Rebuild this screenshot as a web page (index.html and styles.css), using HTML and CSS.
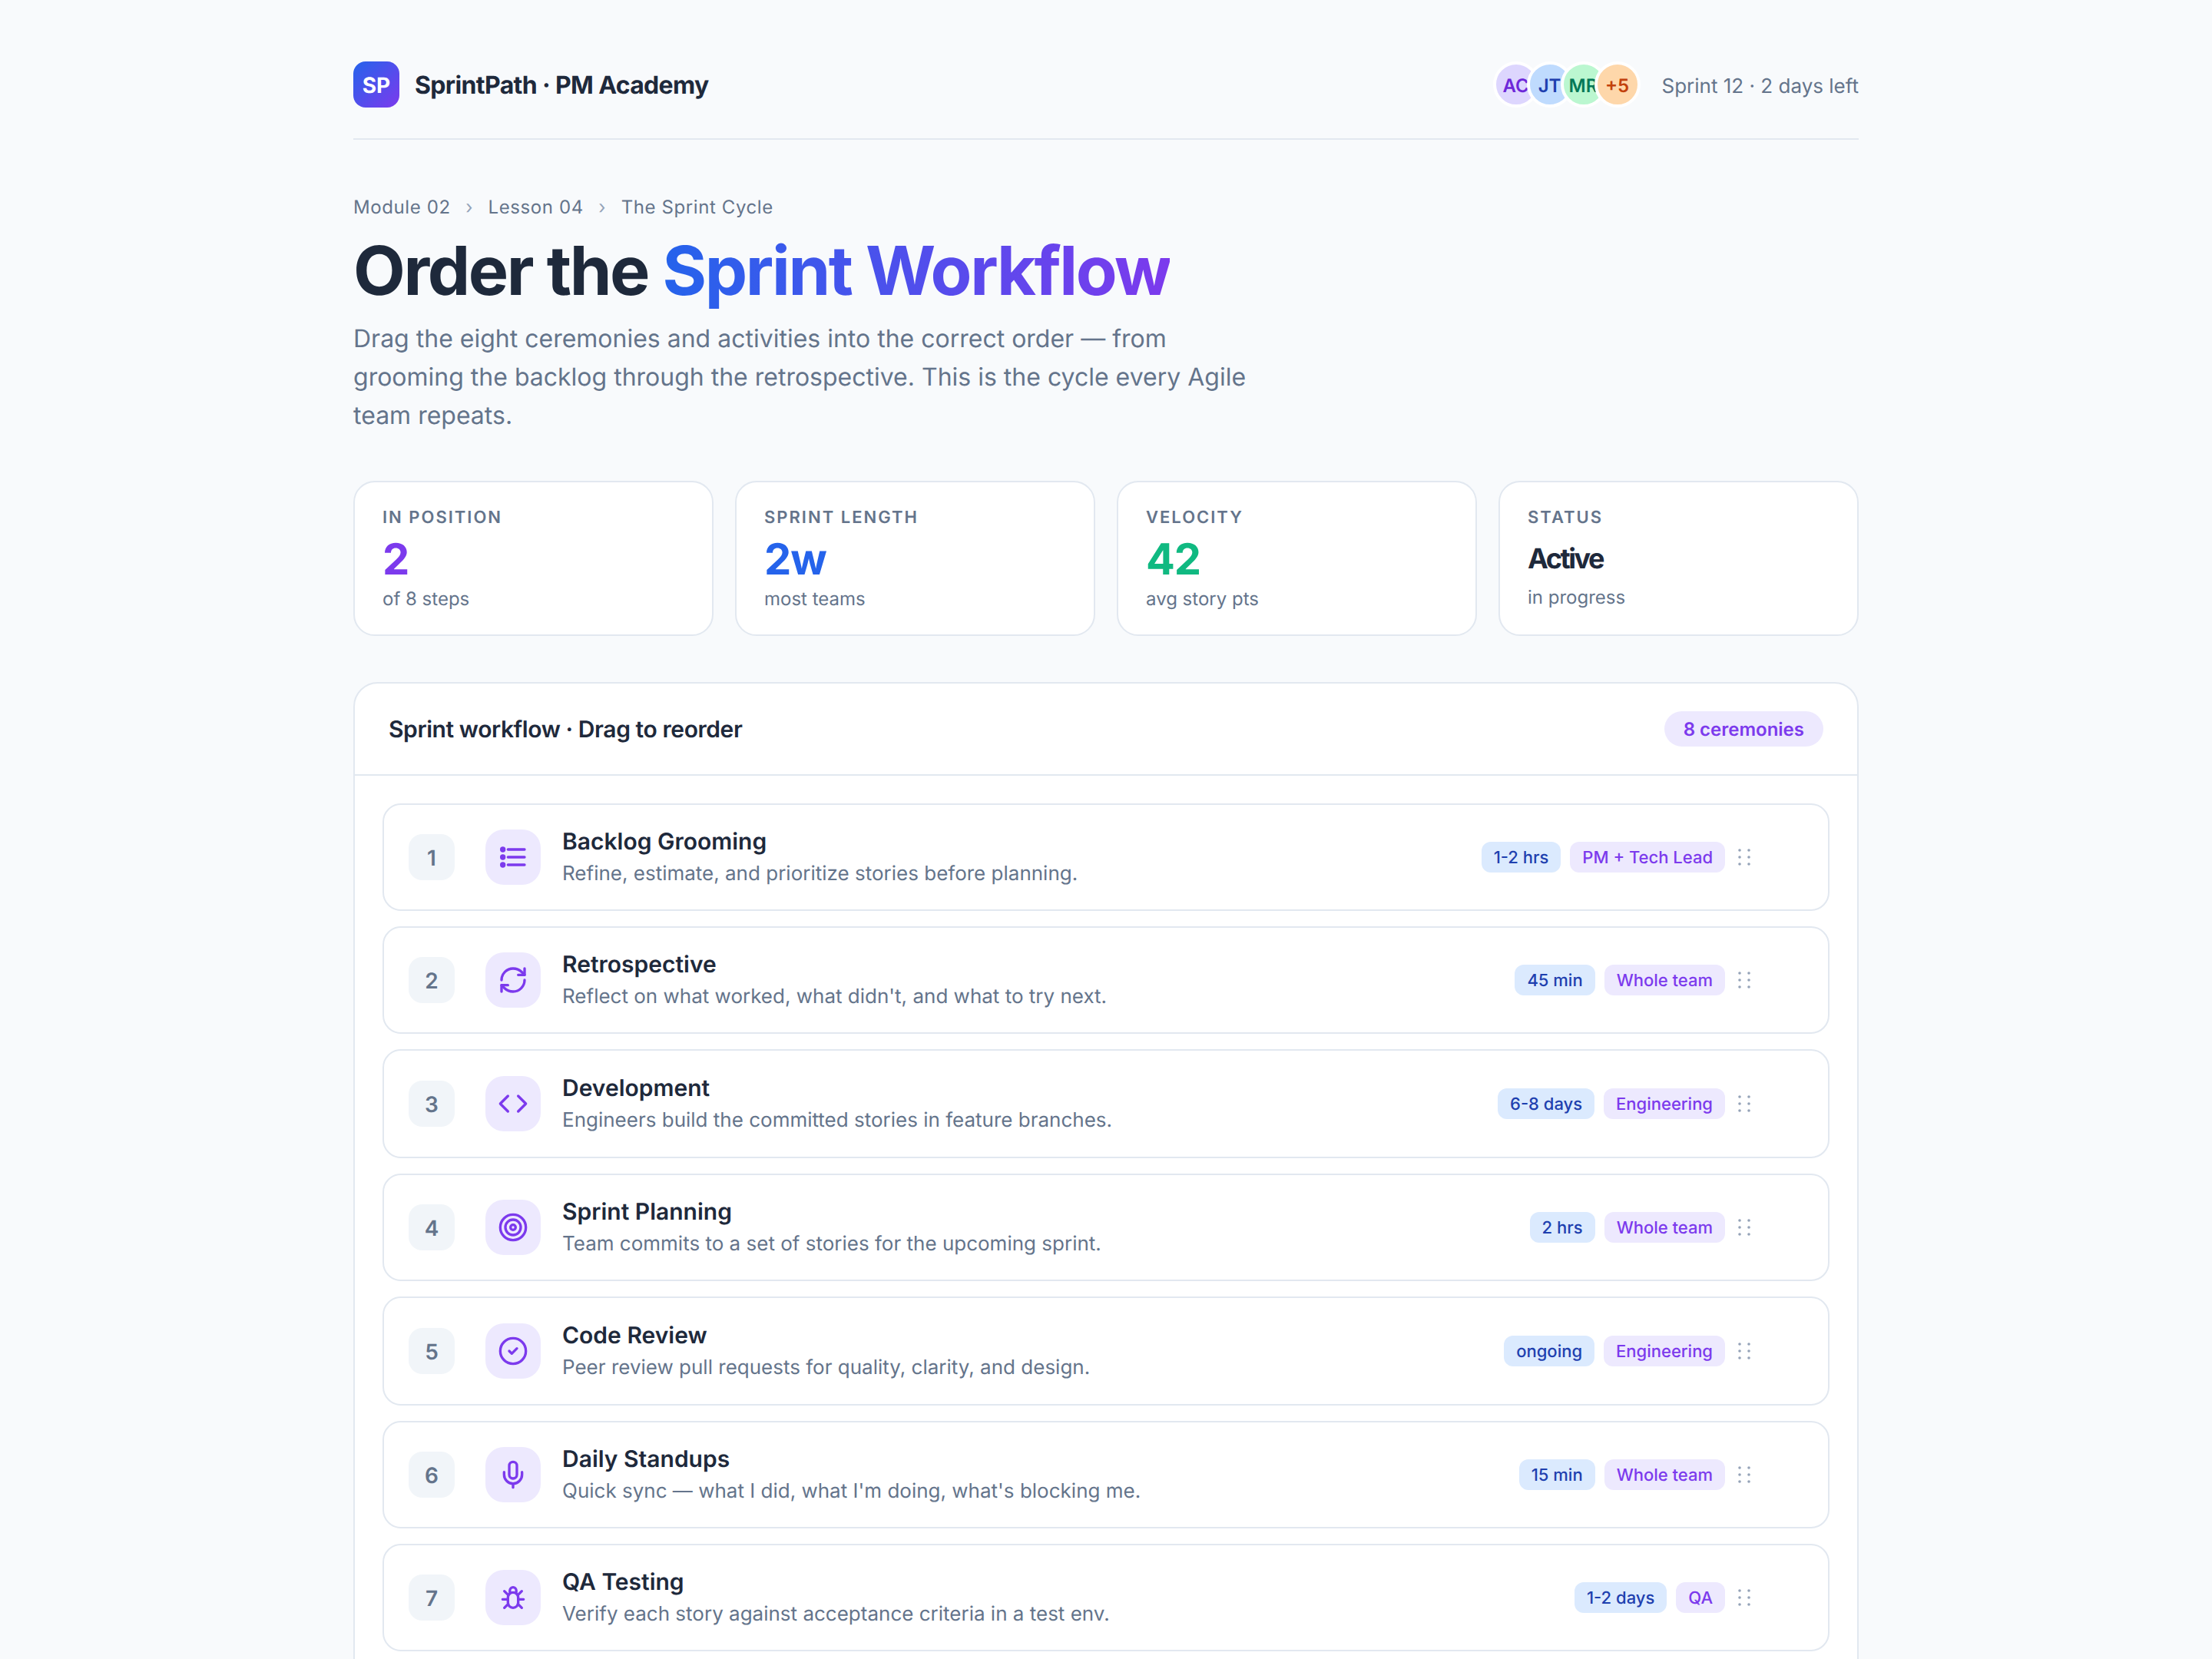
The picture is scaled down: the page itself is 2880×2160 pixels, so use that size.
FILE: index.html
```html
<!DOCTYPE html>
<html lang="en">
<head>
<meta charset="utf-8">
<title>SprintPath · PM Academy</title>
<link rel="stylesheet" href="styles.css">
</head>
<body>
<main class="page">
  <header class="topbar">
    <div class="brand"><div class="logo">SP</div><span class="brand-name">SprintPath · PM Academy</span></div>
    <div class="topbar-right">
      <div class="avatars">
        <span class="avatar av-purple">AC</span><span class="avatar av-blue">JT</span><span class="avatar av-green">MR</span><span class="avatar av-orange">+5</span>
      </div>
      <span class="sprint-info">Sprint 12 · 2 days left</span>
    </div>
  </header>

  <nav class="crumbs"><span>Module 02</span><span class="sep">›</span><span>Lesson 04</span><span class="sep">›</span><span>The Sprint Cycle</span></nav>
  <h1 class="title">Order the <span class="grad">Sprint Workflow</span></h1>
  <p class="lead">Drag the eight ceremonies and activities into the correct order — from grooming the backlog through the retrospective. This is the cycle every Agile team repeats.</p>

  <section class="stats">
    <div class="stat"><div class="stat-label">IN POSITION</div><div class="stat-value c-purple">2</div><div class="stat-sub">of 8 steps</div></div>
    <div class="stat"><div class="stat-label">SPRINT LENGTH</div><div class="stat-value c-blue">2w</div><div class="stat-sub">most teams</div></div>
    <div class="stat"><div class="stat-label">VELOCITY</div><div class="stat-value c-green">42</div><div class="stat-sub">avg story pts</div></div>
    <div class="stat"><div class="stat-label">STATUS</div><div class="stat-value stat-text">Active</div><div class="stat-sub">in progress</div></div>
  </section>

  <section class="panel">
    <div class="panel-head"><span class="panel-title">Sprint workflow · Drag to reorder</span><span class="badge">8 ceremonies</span></div>
    <div class="list">

      <article class="row">
        <div class="num">1</div>
        <div class="icon"><svg viewBox="0 0 24 24"><path d="M8 6h13M8 12h13M8 18h13"/><circle class="solid" cx="4" cy="6" r="2.2"/><circle class="solid" cx="4" cy="12" r="2.2"/><circle class="solid" cx="4" cy="18" r="2.2"/></svg></div>
        <div class="text"><div class="name">Backlog Grooming</div><div class="desc">Refine, estimate, and prioritize stories before planning.</div></div>
        <div class="tags"><span class="tag tag-blue">1-2 hrs</span><span class="tag tag-purple">PM + Tech Lead</span></div>
        <div class="handle"><svg viewBox="0 0 16 22"><circle cx="2" cy="2" r="1.800"/><circle cx="14" cy="2" r="1.800"/><circle cx="2" cy="11" r="1.800"/><circle cx="14" cy="11" r="1.800"/><circle cx="2" cy="20" r="1.800"/><circle cx="14" cy="20" r="1.800"/></svg></div>
      </article>

      <article class="row">
        <div class="num">2</div>
        <div class="icon"><svg viewBox="0 0 24 24"><path d="M3 12a9 9 0 0 1 9-9 9.75 9.75 0 0 1 6.74 2.74L21 8"/><path d="M21 3v5h-5"/><path d="M21 12a9 9 0 0 1-9 9 9.75 9.75 0 0 1-6.74-2.74L3 16"/><path d="M8 16H3v5"/></svg></div>
        <div class="text"><div class="name">Retrospective</div><div class="desc">Reflect on what worked, what didn't, and what to try next.</div></div>
        <div class="tags"><span class="tag tag-blue">45 min</span><span class="tag tag-purple">Whole team</span></div>
        <div class="handle"><svg viewBox="0 0 16 22"><circle cx="2" cy="2" r="1.800"/><circle cx="14" cy="2" r="1.800"/><circle cx="2" cy="11" r="1.800"/><circle cx="14" cy="11" r="1.800"/><circle cx="2" cy="20" r="1.800"/><circle cx="14" cy="20" r="1.800"/></svg></div>
      </article>

      <article class="row row-tall">
        <div class="num">3</div>
        <div class="icon"><svg viewBox="0 0 24 24"><path d="m16 18 6-6-6-6"/><path d="m8 6-6 6 6 6"/></svg></div>
        <div class="text"><div class="name">Development</div><div class="desc">Engineers build the committed stories in feature branches.</div></div>
        <div class="tags"><span class="tag tag-blue">6-8 days</span><span class="tag tag-purple">Engineering</span></div>
        <div class="handle"><svg viewBox="0 0 16 22"><circle cx="2" cy="2" r="1.800"/><circle cx="14" cy="2" r="1.800"/><circle cx="2" cy="11" r="1.800"/><circle cx="14" cy="11" r="1.800"/><circle cx="2" cy="20" r="1.800"/><circle cx="14" cy="20" r="1.800"/></svg></div>
      </article>

      <article class="row">
        <div class="num">4</div>
        <div class="icon"><svg viewBox="0 0 24 24"><circle cx="12" cy="12" r="10"/><circle cx="12" cy="12" r="6"/><circle cx="12" cy="12" r="2"/></svg></div>
        <div class="text"><div class="name">Sprint Planning</div><div class="desc">Team commits to a set of stories for the upcoming sprint.</div></div>
        <div class="tags"><span class="tag tag-blue">2 hrs</span><span class="tag tag-purple">Whole team</span></div>
        <div class="handle"><svg viewBox="0 0 16 22"><circle cx="2" cy="2" r="1.800"/><circle cx="14" cy="2" r="1.800"/><circle cx="2" cy="11" r="1.800"/><circle cx="14" cy="11" r="1.800"/><circle cx="2" cy="20" r="1.800"/><circle cx="14" cy="20" r="1.800"/></svg></div>
      </article>

      <article class="row row-tall">
        <div class="num">5</div>
        <div class="icon"><svg viewBox="0 0 24 24"><circle cx="12" cy="12" r="10"/><path d="m9 12 2 2 4-4"/></svg></div>
        <div class="text"><div class="name">Code Review</div><div class="desc">Peer review pull requests for quality, clarity, and design.</div></div>
        <div class="tags"><span class="tag tag-blue">ongoing</span><span class="tag tag-purple">Engineering</span></div>
        <div class="handle"><svg viewBox="0 0 16 22"><circle cx="2" cy="2" r="1.800"/><circle cx="14" cy="2" r="1.800"/><circle cx="2" cy="11" r="1.800"/><circle cx="14" cy="11" r="1.800"/><circle cx="2" cy="20" r="1.800"/><circle cx="14" cy="20" r="1.800"/></svg></div>
      </article>

      <article class="row">
        <div class="num">6</div>
        <div class="icon"><svg viewBox="0 0 24 24"><rect x="9" y="2" width="6" height="13" rx="3"/><path d="M19 10v2a7 7 0 0 1-14 0v-2"/><path d="M12 19v3"/></svg></div>
        <div class="text"><div class="name">Daily Standups</div><div class="desc">Quick sync — what I did, what I'm doing, what's blocking me.</div></div>
        <div class="tags"><span class="tag tag-blue">15 min</span><span class="tag tag-purple">Whole team</span></div>
        <div class="handle"><svg viewBox="0 0 16 22"><circle cx="2" cy="2" r="1.800"/><circle cx="14" cy="2" r="1.800"/><circle cx="2" cy="11" r="1.800"/><circle cx="14" cy="11" r="1.800"/><circle cx="2" cy="20" r="1.800"/><circle cx="14" cy="20" r="1.800"/></svg></div>
      </article>

      <article class="row">
        <div class="num">7</div>
        <div class="icon"><svg viewBox="0 0 24 24"><path d="M9.500 8V6.500a2.500 2.500 0 0 1 5 0V8"/><rect x="8" y="8" width="8" height="12" rx="4"/><path d="M3.800 13.400H8M16 13.400h4.200M5.200 7l3 3M18.800 7l-3 3M5.200 20l3-3M18.800 20l-3-3"/></svg></div>
        <div class="text"><div class="name">QA Testing</div><div class="desc">Verify each story against acceptance criteria in a test env.</div></div>
        <div class="tags"><span class="tag tag-blue">1-2 days</span><span class="tag tag-purple">QA</span></div>
        <div class="handle"><svg viewBox="0 0 16 22"><circle cx="2" cy="2" r="1.800"/><circle cx="14" cy="2" r="1.800"/><circle cx="2" cy="11" r="1.800"/><circle cx="14" cy="11" r="1.800"/><circle cx="2" cy="20" r="1.800"/><circle cx="14" cy="20" r="1.800"/></svg></div>
      </article>

    </div>
  </section>
</main>
</body>
</html>
```

FILE: styles.css
```css
* { box-sizing: border-box; }
html, body { margin: 0; height: 2160px; overflow: hidden; }
body { background: #f8fafc; color: #1e293b; font-family: "Inter", "Noto Sans", sans-serif; text-rendering: geometricPrecision; }
.page { width: 1960px; margin: 0 auto; padding-top: 80px; }

.topbar { display: flex; align-items: center; justify-content: space-between; padding-bottom: 40px; border-bottom: 2px solid #e2e8f0; }
.brand { display: flex; align-items: center; gap: 20px; }
.logo { width: 60px; height: 60px; padding-top: 2px; border-radius: 16px; background: linear-gradient(135deg, #2563eb, #7c3aed); color: #fff; font-size: 28px; font-weight: 700; display: flex; align-items: center; justify-content: center; }
.brand-name { font-size: 32px; font-weight: 700; letter-spacing: -0.64px; }
.topbar-right { display: flex; align-items: center; gap: 28px; }
.avatars { display: flex; }
.avatar { width: 60px; height: 60px; padding-top: 2px; border-radius: 50%; border: 4px solid #fff; font-size: 24px; font-weight: 600; display: flex; align-items: center; justify-content: center; margin-left: -16px; white-space: nowrap; overflow: hidden; position: relative; }
.avatar:first-child { margin-left: 0; }
.av-purple { background: #ddd6fe; color: #6d28d9; }
.av-blue { background: #bfdbfe; color: #1e40af; }
.av-green { background: #bbf7d0; color: #047857; }
.av-orange { background: #fed7aa; color: #c2410c; }
.sprint-info { padding-top: 4px; font-size: 26px; color: #64748b; }

.crumbs { display: flex; align-items: center; gap: 19.5px; margin-top: 74px; font-size: 24px; line-height: 28px; color: #64748b; letter-spacing: 0.6px; }
.sep { color: #94a3b8; }
.title { margin: 21px 0 0; font-size: 88px; line-height: 96px; font-weight: 700; letter-spacing: -2.4px; color: #1e293b; }
.grad { background: linear-gradient(90deg, #2563eb, #7c3aed); -webkit-background-clip: text; background-clip: text; color: transparent; }
.lead { margin: 15px 0 0; max-width: 1200px; font-size: 32px; line-height: 50px; color: #64748b; }

.stats { display: grid; grid-template-columns: repeat(4, 1fr); gap: 28px; margin-top: 60px; }
.stat { height: 202px; padding: 34px 36px; background: #fff; border: 2px solid #e2e8f0; border-radius: 28px; }
.stat-label { font-size: 22px; line-height: 24px; font-weight: 600; letter-spacing: 2px; color: #64748b; }
.stat-value { margin-top: 14px; font-size: 56px; line-height: 56px; font-weight: 700; letter-spacing: -1.12px; }
.stat-text { height: 54px; font-size: 36px; line-height: 54px; letter-spacing: -2.4px; color: #1e293b; }
.stat-sub { margin-top: 11px; font-size: 24px; line-height: 26px; color: #64748b; }
.c-purple { color: #7c3aed; }
.c-blue { color: #2563eb; }
.c-green { color: #10b981; }

.panel { margin-top: 60px; background: #fff; border: 2px solid #e2e8f0; border-radius: 32px 32px 0 0; }
.panel-head { display: flex; align-items: center; justify-content: space-between; height: 120px; padding: 0 44px; border-bottom: 2px solid #e2e8f0; }
.panel-title { padding-top: 2px; font-size: 30px; font-weight: 600; letter-spacing: -0.42px; }
.badge { height: 46px; padding: 0 25px; border-radius: 23px; background: #ede9fe; color: #7c3aed; font-size: 24px; font-weight: 600; display: flex; align-items: center; }

.list { display: flex; flex-direction: column; gap: 20px; padding: 36px; }
.row { display: flex; align-items: center; height: 140px; padding: 0 32px; background: #fff; border: 2px solid #e2e8f0; border-radius: 24px; }
.row-tall { height: 142px; }
.num { flex: none; width: 60px; height: 60px; padding-top: 2px; margin-right: 40px; border-radius: 18px; background: #f1f5f9; color: #64748b; font-size: 28px; font-weight: 600; display: flex; align-items: center; justify-content: center; }
.icon { flex: none; width: 72px; height: 72px; margin-right: 28px; border-radius: 24px; background: #ede9fe; display: flex; align-items: center; justify-content: center; }
.icon svg { width: 40px; height: 40px; fill: none; stroke: #7c3aed; stroke-width: 2; stroke-linecap: round; stroke-linejoin: round; }
.icon .solid { fill: #7c3aed; stroke: none; }
.text { flex: 1; min-width: 0; padding-top: 2px; }
.name { font-size: 30px; line-height: 42px; font-weight: 600; color: #1e293b; }
.desc { font-size: 26px; line-height: 42px; color: #64748b; }
.tags { display: flex; gap: 12px; }
.tag { height: 40px; padding: 2px 16px 0; border-radius: 12px; font-size: 22px; font-weight: 500; display: flex; align-items: center; }
.tag-blue { background: #dbeafe; color: #1e40af; }
.tag-purple { background: #ede9fe; color: #7c3aed; }
.handle { flex: none; width: 85px; margin-left: 17px; display: flex; align-items: center; }
.handle svg { width: 16px; height: 22px; fill: #94a3b8; }
```
